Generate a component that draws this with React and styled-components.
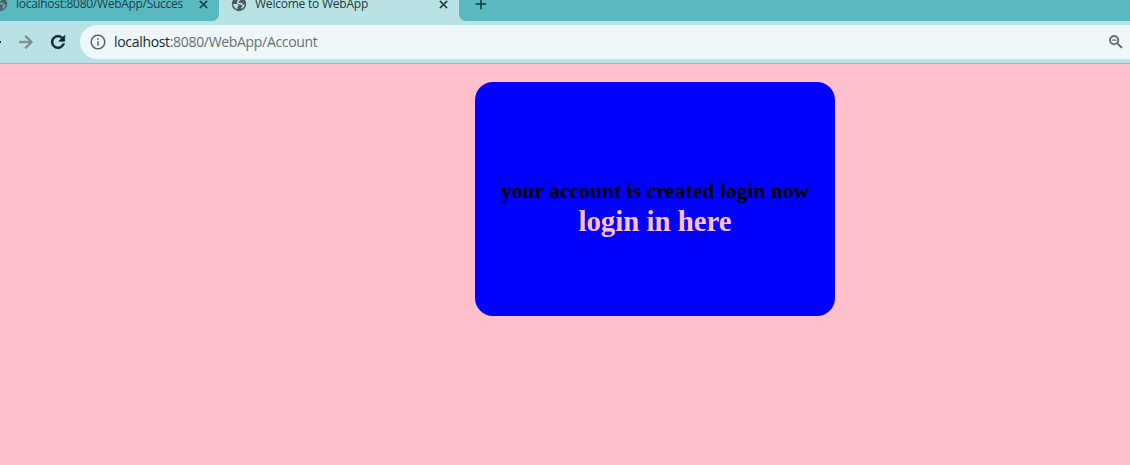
import React from "react";
import styled, { createGlobalStyle } from "styled-components";
import { MdRefresh, MdArrowForward, MdInfoOutline, MdZoomOut, MdClose, MdAdd } from "react-icons/md";

const GlobalStyle = createGlobalStyle`
  * { box-sizing: border-box; }
  body { margin: 0; background: #ffc0cb; overflow: hidden; }
  svg path[fill="none"] { stroke: none; }
`;

const Window = styled.div`
  width: 1130px;
  height: 465px;
  display: flex;
  flex-direction: column;
  overflow: hidden;
  background: #ffc0cb;
`;

const TabStrip = styled.div`
  display: flex;
  flex: 0 0 21px;
  background: #b8e2e4;
  overflow: hidden;
  font: 12px/16px "Open Sans", "Noto Sans", sans-serif;
`;

const Tab = styled.div`
  display: flex;
  align-items: center;
  height: 21px;
  width: ${(p) => p.$width}px;
  padding-bottom: 13px;
  padding-left: ${(p) => p.$indent}px;
  padding-right: 9px;
  background: ${(p) => (p.$active ? "transparent" : "#5ab8c1")};
  color: ${(p) => (p.$active ? "#24383b" : "#184248")};
  border-bottom-right-radius: 7px;
  svg { flex: none; }
`;

const TabTitle = styled.span`
  flex: 1;
  margin-left: 8px;
  white-space: nowrap;
  letter-spacing: ${(p) => p.$spacing}px;
`;

const CloseIcon = styled(MdClose)`
  stroke: currentColor;
  stroke-width: 1.3px;
`;

const StripEnd = styled.div`
  flex: 1;
  display: flex;
  align-items: center;
  height: 21px;
  padding: 0 0 13px 13px;
  background: #5ab8c1;
  border-bottom-left-radius: 7px;
  color: #17363b;
  svg { flex: none; }
`;

const Toolbar = styled.div`
  display: flex;
  align-items: center;
  flex: 0 0 43px;
  background: #b8e2e4;
  border-bottom: 1px solid #a3b5bf;
  svg { flex: none; }
`;

const BackStub = styled.span`
  width: 1px;
  height: 2px;
  margin-right: 15px;
  background: #20393d;
`;

const ForwardIcon = styled(MdArrowForward)`
  color: #76898b;
  stroke: currentColor;
  stroke-width: 0.7px;
`;

const ReloadIcon = styled(MdRefresh)`
  margin-left: 12px;
  color: #10262a;
  stroke: currentColor;
  stroke-width: 0.9px;
`;

const AddressBar = styled.div`
  flex: 1;
  display: flex;
  align-items: center;
  height: 34px;
  margin-left: 12px;
  padding: 0 5px 0 9px;
  background: #eef8fa;
  border-radius: 17px 0 0 17px;
  color: #5a6468;
`;

const ZoomIcon = styled(MdZoomOut)`
  stroke: currentColor;
  stroke-width: 0.5px;
`;

const Url = styled.span`
  flex: 1;
  margin-left: 7px;
  font: 14px/20px "Open Sans", "Noto Sans", sans-serif;
  letter-spacing: -0.32px;
  color: #667174;
`;

const Host = styled.span`
  color: #202729;
`;

const Page = styled.main`
  flex: 1;
  padding: 18px 0 0 475px;
`;

const Card = styled.section`
  width: 360px;
  height: 234px;
  padding-top: 95px;
  border-radius: 18px;
  background: #0000ff;
  text-align: center;
  white-space: nowrap;
  font-family: "Liberation Serif", serif;
  font-weight: bold;
`;

const Message = styled.div`
  font-size: 21.6px;
  line-height: 28px;
  color: #000;
`;

const LoginLink = styled.a`
  display: block;
  font-size: 28.8px;
  line-height: 32px;
  color: #ffc0cb;
`;

const GlobeSlot = styled.span`
  display: flex;
  flex: none;
  justify-content: flex-end;
  width: ${(p) => p.$width}px;
  overflow: hidden;
`;

function Globe({ color, land }) {
  return (
    <svg width="16" height="16" viewBox="0 0 16 16">
      <circle cx="8" cy="8" r="7.2" fill={color} />
      <path d="M2.2 8h4.2l1.4 1.6-1.4 1.2v2.4C4 12.6 2.2 10.6 2.2 8Z" fill={land} />
      <path
        d="M8.2 2.4 10 2.8 9.2 4.6 7.6 5.4V6.8h3l1.2 1.6h1.8c-.2 2-1.4 3.6-3 4.4L10 11.2h1.2V9.6L9 8.2H6.4L6 5.6Z"
        fill={land}
      />
    </svg>
  );
}

export default function App() {
  return (
    <Window>
      <GlobalStyle />
      <TabStrip>
        <Tab $width={219} $indent={0}>
          <GlobeSlot $width={8}>
            <Globe color="#4d6569" land="#5ab8c1" />
          </GlobeSlot>
          <TabTitle $spacing={-0.29}>localhost:8080/WebApp/Succes</TabTitle>
          <CloseIcon size={13} />
        </Tab>
        <Tab $active $width={240} $indent={12}>
          <GlobeSlot $width={16}>
            <Globe color="#4d5b5e" land="#b8e2e4" />
          </GlobeSlot>
          <TabTitle $spacing={-0.22}>Welcome to WebApp</TabTitle>
          <CloseIcon size={13} />
        </Tab>
        <StripEnd>
          <MdAdd size={18} />
        </StripEnd>
      </TabStrip>
      <Toolbar>
        <BackStub />
        <ForwardIcon size={20} />
        <ReloadIcon size={20} />
        <AddressBar>
          <MdInfoOutline size={18} />
          <Url>
            <Host>localhost</Host>:8080/WebApp/Account
          </Url>
          <ZoomIcon size={18} />
        </AddressBar>
      </Toolbar>
      <Page>
        <Card>
          <Message>your account is created login now</Message>
          <LoginLink>login in here</LoginLink>
        </Card>
      </Page>
    </Window>
  );
}
